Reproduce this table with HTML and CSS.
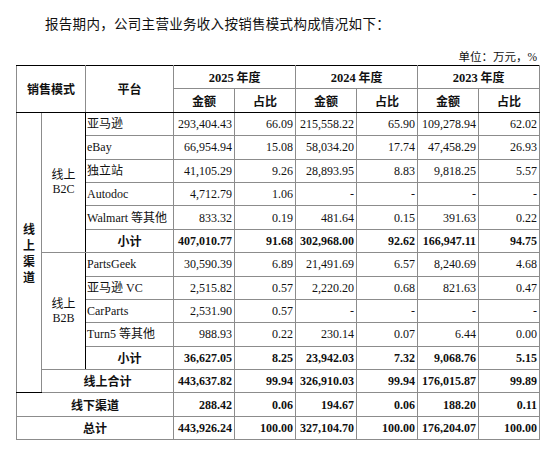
FILE: index.html
```html
<!DOCTYPE html>
<html lang="zh-CN">
<head>
    <meta charset="UTF-8">
    <meta name="viewport" content="width=device-width, initial-scale=1.0">
    <title>主营业务收入按销售模式构成</title>
    <link rel="stylesheet" href="styles.css">
</head>
<body>
    <p class="intro">报告期内，公司主营业务收入按销售模式构成情况如下：</p>
    <p class="unit">单位：万元，%</p>

    <table class="sales">
        <colgroup>
            <col class="c-mode1">
            <col class="c-mode2">
            <col class="c-platform">
            <col class="c-num"><col class="c-num">
            <col class="c-num"><col class="c-num">
            <col class="c-num"><col class="c-num">
        </colgroup>
        <thead>
            <tr>
                <th colspan="2" rowspan="2">销售模式</th>
                <th rowspan="2">平台</th>
                <th colspan="2"><span class="yr">2025</span> 年度</th>
                <th colspan="2"><span class="yr">2024</span> 年度</th>
                <th colspan="2"><span class="yr">2023</span> 年度</th>
            </tr>
            <tr class="sub-head">
                <th>金额</th><th>占比</th>
                <th>金额</th><th>占比</th>
                <th>金额</th><th>占比</th>
            </tr>
        </thead>
        <tbody>
            <tr>
                <td rowspan="12" class="channel"><div class="vertical">线上渠道</div></td>
                <td rowspan="6" class="group">线上<br>B2C</td>
                <td class="name">亚马逊</td>
                <td>293,404.43</td><td>66.09</td>
                <td>215,558.22</td><td>65.90</td>
                <td>109,278.94</td><td>62.02</td>
            </tr>
            <tr>
                <td class="name">eBay</td>
                <td>66,954.94</td><td>15.08</td>
                <td>58,034.20</td><td>17.74</td>
                <td>47,458.29</td><td>26.93</td>
            </tr>
            <tr>
                <td class="name">独立站</td>
                <td>41,105.29</td><td>9.26</td>
                <td>28,893.95</td><td>8.83</td>
                <td>9,818.25</td><td>5.57</td>
            </tr>
            <tr class="dark">
                <td class="name">Autodoc</td>
                <td>4,712.79</td><td>1.06</td>
                <td>-</td><td>-</td>
                <td>-</td><td>-</td>
            </tr>
            <tr>
                <td class="name">Walmart 等其他</td>
                <td>833.32</td><td>0.19</td>
                <td>481.64</td><td>0.15</td>
                <td>391.63</td><td>0.22</td>
            </tr>
            <tr class="dark total">
                <td class="label">小计</td>
                <td>407,010.77</td><td>91.68</td>
                <td>302,968.00</td><td>92.62</td>
                <td>166,947.11</td><td>94.75</td>
            </tr>
            <tr class="dark">
                <td rowspan="5" class="group">线上<br>B2B</td>
                <td class="name">PartsGeek</td>
                <td>30,590.39</td><td>6.89</td>
                <td>21,491.69</td><td>6.57</td>
                <td>8,240.69</td><td>4.68</td>
            </tr>
            <tr>
                <td class="name">亚马逊 VC</td>
                <td>2,515.82</td><td>0.57</td>
                <td>2,220.20</td><td>0.68</td>
                <td>821.63</td><td>0.47</td>
            </tr>
            <tr>
                <td class="name">CarParts</td>
                <td>2,531.90</td><td>0.57</td>
                <td>-</td><td>-</td>
                <td>-</td><td>-</td>
            </tr>
            <tr class="dark">
                <td class="name">Turn5 等其他</td>
                <td>988.93</td><td>0.22</td>
                <td>230.14</td><td>0.07</td>
                <td>6.44</td><td>0.00</td>
            </tr>
            <tr class="dark total">
                <td class="label">小计</td>
                <td>36,627.05</td><td>8.25</td>
                <td>23,942.03</td><td>7.32</td>
                <td>9,068.76</td><td>5.15</td>
            </tr>
            <tr class="dark total">
                <td colspan="2" class="label">线上合计</td>
                <td>443,637.82</td><td>99.94</td>
                <td>326,910.03</td><td>99.94</td>
                <td>176,015.87</td><td>99.89</td>
            </tr>
            <tr class="total">
                <td colspan="3" class="label">线下渠道</td>
                <td>288.42</td><td>0.06</td>
                <td>194.67</td><td>0.06</td>
                <td>188.20</td><td>0.11</td>
            </tr>
            <tr class="dark total">
                <td colspan="3" class="label">总计</td>
                <td>443,926.24</td><td>100.00</td>
                <td>327,104.70</td><td>100.00</td>
                <td>176,204.07</td><td>100.00</td>
            </tr>
        </tbody>
    </table>
</body>
</html>
```

FILE: styles.css
```css
* {
    margin: 0;
    padding: 0;
    box-sizing: border-box;
}

body {
    font-family: 'Liberation Serif', 'Noto Sans CJK SC', serif;
    color: #111;
    background-color: #fff;
    width: 551px;
}

.intro {
    margin-top: 17px;
    padding-left: 45px;
    font-size: 13.5px;
    line-height: 16px;
    letter-spacing: 0.3px;
}

.unit {
    margin-top: 17px;
    width: 539px;
    text-align: right;
    font-size: 11.5px;
    line-height: 14px;
    padding-right: 2px;
}

.sales {
    margin-top: 1px;
    margin-left: 16px;
    width: 523px;
    border-collapse: collapse;
    table-layout: fixed;
    border: 1.5px solid #000;
    font-size: 12px;
}

.c-mode1 { width: 25px; }
.c-mode2 { width: 44px; }
.c-platform { width: 88px; }
.c-num { width: 61px; }

.sales th,
.sales td {
    height: 23.4px;
    padding: 0 2px 0 2px;
    border: 1px solid #8c8c8c;
    white-space: nowrap;
    line-height: 14px;
}

.sales th {
    font-family: 'Noto Sans CJK SC', sans-serif;
    font-weight: 700;
    text-align: center;
    font-size: 12px;
}

.sales thead tr:first-child th {
    border-top-color: #000;
}

.sales .yr {
    font-family: 'Liberation Serif', serif;
    font-size: 12.5px;
}

.sales th[rowspan],
.sales .sub-head th {
    border-bottom: 1.5px solid #000;
}

.sales td {
    text-align: right;
}

.sales tr.dark td {
    border-top-color: #000;
}

.sales tr.total td {
    font-weight: 700;
}

.sales td.name {
    text-align: left;
    padding-left: 1px;
}

.sales td.label {
    text-align: center;
    font-family: 'Noto Sans CJK SC', sans-serif;
    font-weight: 500;
}

.sales td.group {
    text-align: center;
    line-height: 14px;
    font-size: 12px;
    border-top-color: #000;
    border-right-color: #000;
}

.sales td.channel {
    text-align: center;
    border-top-color: #000;
    border-bottom-color: #000;
}

.vertical {
    width: 12px;
    margin: 0 auto;
    white-space: normal;
    word-break: break-all;
    font-family: 'Noto Sans CJK SC', sans-serif;
    font-weight: 700;
    line-height: 16px;
}
```
